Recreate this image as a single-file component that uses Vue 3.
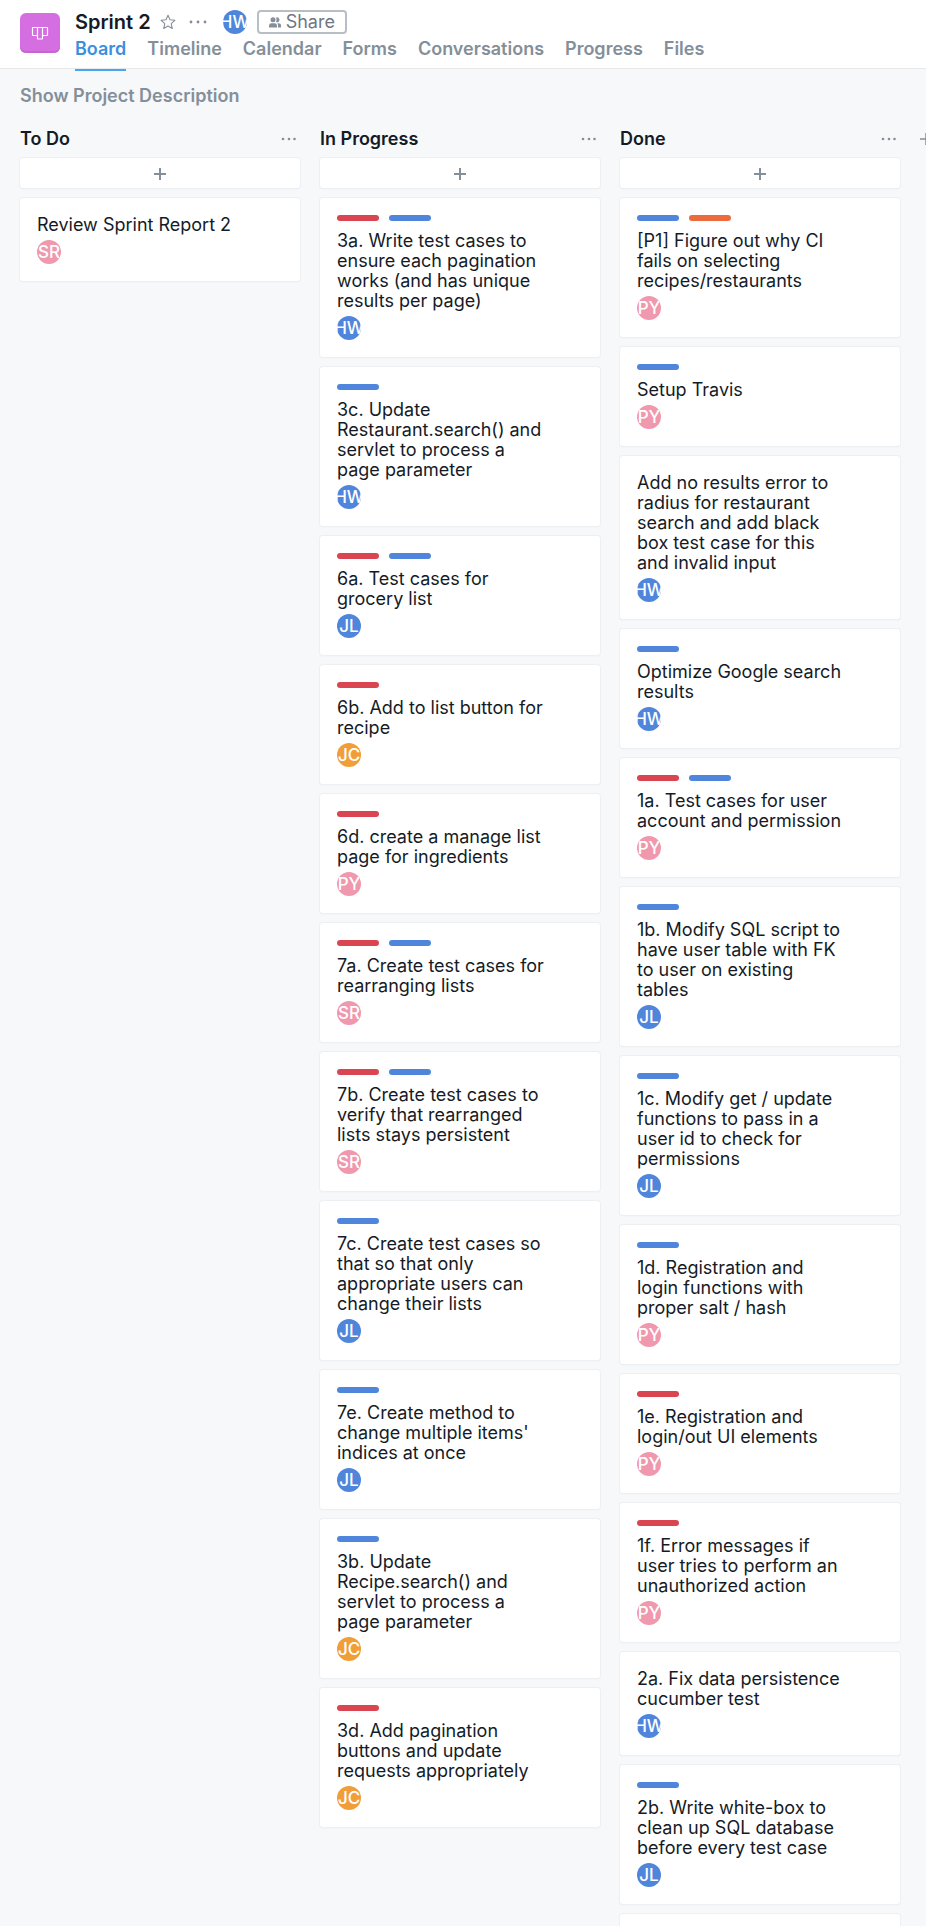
<script setup>
const tabs = ['Board', 'Timeline', 'Calendar', 'Forms', 'Conversations', 'Progress', 'Files']

const card = (title, who, ...tags) => ({ title, who, tags })

const columns = [
  {
    name: 'To Do',
    cards: [card('Review Sprint Report 2', 'SR')],
  },
  {
    name: 'In Progress',
    cards: [
      card('3a. Write test cases to\nensure each pagination\nworks (and has unique\nresults per page)', 'HW', 'red', 'blue'),
      card('3c. Update\nRestaurant.search() and\nservlet to process a\npage parameter', 'HW', 'blue'),
      card('6a. Test cases for\ngrocery list', 'JL', 'red', 'blue'),
      card('6b. Add to list button for\nrecipe', 'JC', 'red'),
      card('6d. create a manage list\npage for ingredients', 'PY', 'red'),
      card('7a. Create test cases for\nrearranging lists', 'SR', 'red', 'blue'),
      card('7b. Create test cases to\nverify that rearranged\nlists stays persistent', 'SR', 'red', 'blue'),
      card('7c. Create test cases so\nthat so that only\nappropriate users can\nchange their lists', 'JL', 'blue'),
      card("7e. Create method to\nchange multiple items'\nindices at once", 'JL', 'blue'),
      card('3b. Update\nRecipe.search() and\nservlet to process a\npage parameter', 'JC', 'blue'),
      card('3d. Add pagination\nbuttons and update\nrequests appropriately', 'JC', 'red'),
    ],
  },
  {
    name: 'Done',
    cards: [
      card('[P1] Figure out why CI\nfails on selecting\nrecipes/restaurants', 'PY', 'blue', 'orange'),
      card('Setup Travis', 'PY', 'blue'),
      card('Add no results error to\nradius for restaurant\nsearch and add black\nbox test case for this\nand invalid input', 'HW'),
      card('Optimize Google search\nresults', 'HW', 'blue'),
      card('1a. Test cases for user\naccount and permission', 'PY', 'red', 'blue'),
      card('1b. Modify SQL script to\nhave user table with FK\nto user on existing\ntables', 'JL', 'blue'),
      card('1c. Modify get / update\nfunctions to pass in a\nuser id to check for\npermissions', 'JL', 'blue'),
      card('1d. Registration and\nlogin functions with\nproper salt / hash', 'PY', 'blue'),
      card('1e. Registration and\nlogin/out UI elements', 'PY', 'red'),
      card('1f. Error messages if\nuser tries to perform an\nunauthorized action', 'PY', 'red'),
      card('2a. Fix data persistence\ncucumber test', 'HW'),
      card('2b. Write white-box to\nclean up SQL database\nbefore every test case', 'JL', 'blue'),
      card('', ''),
    ],
  },
]
</script>

<template>
  <div class="app">
    <header class="topbar">
      <div class="project-icon">
        <svg width="18" height="16" viewBox="0 0 18 16" fill="none" stroke="#fff" stroke-width="1.2" stroke-linejoin="round">
          <path d="M2 1.500h14q.500 0 .500.500v7q0 .500-.500.500h-4.500v3q0 .500-.500.500H7q-.500 0-.500-.500v-3H2q-.500 0-.500-.500V2q0-.500.500-.500zM6.500 1.500v8M11.500 1.500v8" />
        </svg>
      </div>
      <div class="heading">
        <div class="title-row">
          <h1>Sprint 2</h1>
          <button class="plain star" aria-label="Add to favorites">
            <svg width="16" height="16" viewBox="0 0 16 16" fill="none" stroke="#848f99" stroke-width="1.1" stroke-linejoin="round">
              <path d="M8 1.300l2 4.500 4.900.500-3.700 3.300 1.100 4.900L8 12l-4.300 2.500 1.100-4.900L1.100 6.300 6 5.800z" />
            </svg>
          </button>
          <button class="plain dots" aria-label="Project actions">
            <svg width="18" height="4" viewBox="0 0 18 4" fill="#848f99">
              <circle cx="2" cy="2" r="1.400" /><circle cx="9" cy="2" r="1.400" /><circle cx="16" cy="2" r="1.400" />
            </svg>
          </button>
          <span class="avatar HW"><span>HW</span></span>
          <button class="share">
            <svg width="12" height="11" viewBox="0 0 12 11" fill="#848f99">
              <circle cx="4" cy="2.800" r="2.500" /><path d="M0 10.500V8.500Q0 6.300 2.500 6.300h3Q8 6.300 8 8.500v2z" />
              <path d="M7 .5a2.500 2.500 0 1 1 0 4.600q1-2.300 0-4.600zM8.300 6.300h1Q12 6.300 12 8.500v2H9v-2q0-1.300-.700-2.200z" />
            </svg>
            Share
          </button>
        </div>
        <nav>
          <a v-for="(tab, i) in tabs" :key="tab" href="#" :class="{ active: i === 0 }">{{ tab }}</a>
        </nav>
      </div>
    </header>

    <button class="plain description">Show Project Description</button>

    <main class="board">
      <section v-for="column in columns" :key="column.name" class="column">
        <div class="column-head">
          <h2>{{ column.name }}</h2>
          <button class="plain dots" aria-label="Column actions">
            <svg width="16" height="4" viewBox="0 0 16 4" fill="#848f99">
              <circle cx="2" cy="2" r="1.300" /><circle cx="8" cy="2" r="1.300" /><circle cx="13.500" cy="2" r="1.300" />
            </svg>
          </button>
        </div>
        <button class="add" aria-label="Add task">
          <svg width="12" height="12" viewBox="0 0 12 12" stroke="#848f99" stroke-width="2"><path d="M6 0v12M0 6h12" /></svg>
        </button>
        <article v-for="(c, i) in column.cards" :key="i" class="card">
          <div v-if="c.tags.length" class="tags">
            <span v-for="tag in c.tags" :key="tag" :class="['tag', tag]"></span>
          </div>
          <p>{{ c.title }}</p>
          <span v-if="c.who" :class="['avatar', c.who]"><span>{{ c.who }}</span></span>
        </article>
      </section>
      <button class="plain add-column" aria-label="Add column">
        <svg width="12" height="12" viewBox="0 0 12 12" stroke="#848f99" stroke-width="1.500"><path d="M6 0v12M0 6h12" /></svg>
      </button>
    </main>
  </div>
</template>

<style>
body {
  margin: 0;
  background: #f6f8fa;
}
</style>

<style scoped>
.app {
  display: flex;
  flex-direction: column;
  height: 100vh;
  overflow: hidden;
  background: #f6f8fa;
  color: #151b26;
  font: 18px/20px Inter, "Liberation Sans", sans-serif;
}
h1,
h2,
p {
  margin: 0;
}
button {
  font: inherit;
  cursor: pointer;
}
.plain {
  display: flex;
  padding: 0;
  border: 0;
  background: none;
}
.topbar {
  flex: none;
  display: flex;
  gap: 15px;
  height: 68px;
  padding: 0 20px;
  background: #fff;
  border-bottom: 1px solid #e6e8ea;
}
.project-icon {
  display: flex;
  align-items: center;
  justify-content: center;
  width: 40px;
  height: 40px;
  margin-top: 13px;
  border-radius: 6px;
  background: #d56ee0;
  box-shadow: inset 0 -2px #c566d0;
}
.project-icon svg {
  margin-top: 2px;
}
.heading {
  padding-top: 10px;
}
.title-row {
  display: flex;
  align-items: center;
  height: 24px;
}
h1 {
  font-size: 20px;
  font-weight: 600;
}
.star {
  margin-left: 9px;
}
.title-row .dots {
  margin: 0 16px 0 13px;
}
.share {
  display: flex;
  align-items: center;
  gap: 5px;
  height: 24px;
  margin-left: 10px;
  padding: 0 10px;
  border: 2px solid #b7bfc6;
  border-radius: 4px;
  background: #fff;
  color: #6f7782;
}
nav {
  display: flex;
  gap: 21px;
  margin-top: 4px;
}
nav a {
  height: 31px;
  line-height: 22px;
  font-weight: 600;
  color: #848f99;
  text-decoration: none;
}
nav a.active {
  color: #3b8fe0;
  border-bottom: 2px solid #4aa4ee;
}
.description {
  flex: none;
  align-self: flex-start;
  margin: 17px 20px 0;
  font-weight: 600;
  color: #848f99;
}
.board {
  flex: 1;
  min-height: 0;
  display: flex;
  align-items: flex-start;
  gap: 20px;
  padding: 23px 0 0 20px;
  overflow: hidden;
}
.column {
  flex: none;
  width: 280px;
  display: flex;
  flex-direction: column;
  gap: 10px;
}
.column-head {
  display: flex;
  align-items: center;
  justify-content: space-between;
  height: 19px;
  padding-right: 3px;
}
h2 {
  font-size: 18px;
  font-weight: 600;
}
.add,
.card {
  border: 0;
  border-radius: 3px;
  background: #fff;
  box-shadow: 0 0 0 1px #edf0f2, 0 1px 1px #dfe3e6;
}
.add {
  display: flex;
  align-items: center;
  justify-content: center;
  height: 30px;
  padding: 2px 0 0;
}
.card {
  padding: 17px;
}
.tags {
  display: flex;
  gap: 10px;
  margin-bottom: 10px;
}
.tag {
  width: 42px;
  height: 6px;
  border-radius: 3px;
}
.red {
  background: #d94652;
}
.blue {
  background: #4f86db;
}
.orange {
  background: #eb6b3e;
}
.card p {
  min-height: 20px;
  margin-bottom: 5px;
  white-space: pre-line;
}
.avatar {
  display: flex;
  align-items: center;
  justify-content: center;
  width: 24px;
  height: 24px;
  border-radius: 50%;
  overflow: hidden;
  color: #fff;
  font-size: 17px;
  font-weight: 500;
}
.HW,
.JL {
  background: #4f86db;
}
.JC {
  background: #f19e38;
}
.PY,
.SR {
  background: #f098ae;
}
.add-column {
  flex: none;
  margin-top: 4px;
}
</style>
